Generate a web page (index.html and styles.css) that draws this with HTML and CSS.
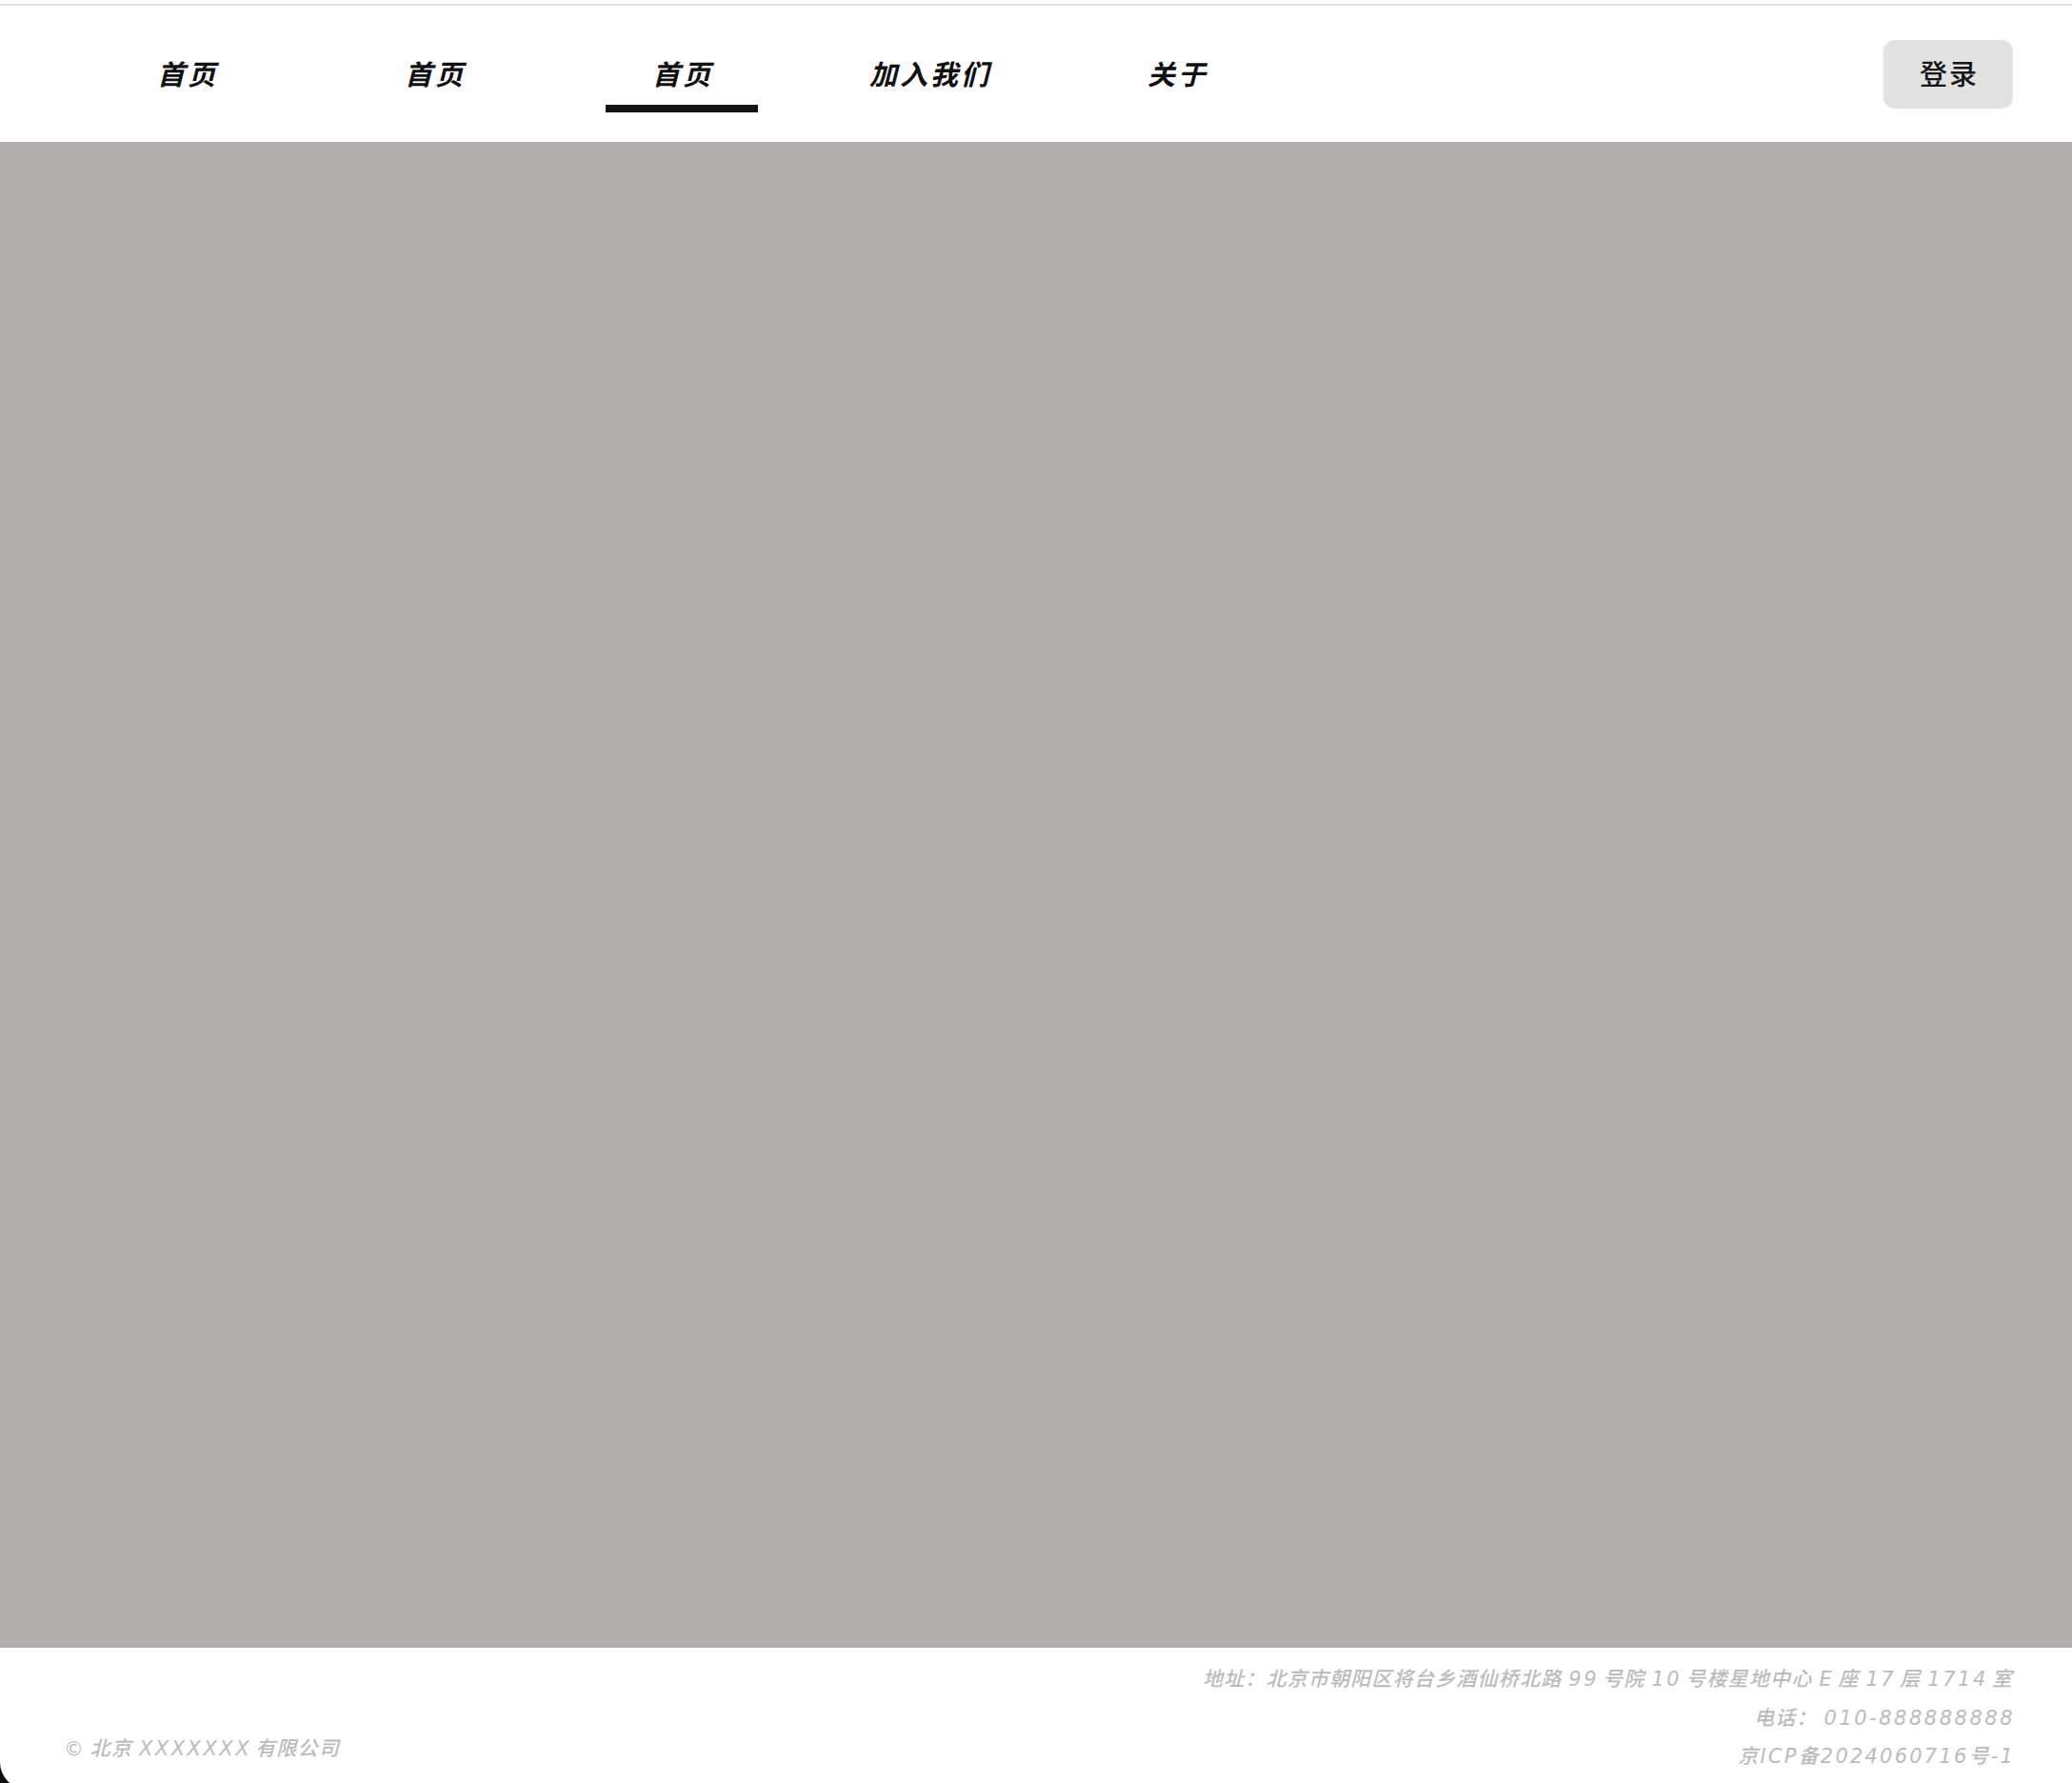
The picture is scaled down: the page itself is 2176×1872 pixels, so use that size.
FILE: index.html
```html
<!DOCTYPE html>
<html lang="zh-CN">
<head>
<meta charset="utf-8">
<title>首页</title>
<link rel="stylesheet" href="styles.css">
</head>
<body>
<div class="page">
  <div class="topline"></div>
  <header class="header">
    <nav class="nav">
      <a class="nav-item">首页</a>
      <a class="nav-item">首页</a>
      <a class="nav-item active">首页</a>
      <a class="nav-item">加入我们</a>
      <a class="nav-item">关于</a>
    </nav>
    <button class="login">登录</button>
  </header>
  <main class="hero"></main>
  <footer class="footer">
    <div class="copyright"><span class="en first">©</span>北京<span class="en">XXXXXXX</span>有限公司</div>
    <div class="info">
      <div class="info-line">地址：北京市朝阳区将台乡酒仙桥北路<span class="en">99</span>号院<span class="en">10</span>号楼星地中心<span class="en">E</span>座<span class="en">17</span>层<span class="en">1714</span>室</div>
      <div class="info-line">电话：<span class="en end">010-888888888</span></div>
      <div class="info-line">京<span class="en tight">ICP</span>备<span class="en tight">2024060716</span>号<span class="en tight end">-1</span></div>
    </div>
  </footer>
</div>
</body>
</html>
```
FILE: styles.css
```css
html {
  background: #140d0e;
  overflow: hidden;
}
body {
  margin: 0;
  font-family: "Noto Sans CJK SC", "Noto Sans", sans-serif;
}
.page {
  background: #ffffff;
  display: flex;
  flex-direction: column;
  height: 1879px;
  border-bottom-left-radius: 29px;
  overflow: hidden;
}
.topline {
  flex-shrink: 0;
  margin-top: 4px;
  height: 2px;
  background: #e0e0e0;
}
.header {
  flex-shrink: 0;
  height: 143px;
  display: flex;
  align-items: center;
  justify-content: space-between;
  padding: 0 62px 0 67px;
}
.nav {
  display: flex;
  align-items: center;
  margin-top: -3px;
}
.nav-item {
  position: relative;
  width: 260px;
  text-align: center;
  font-size: 29px;
  line-height: 40px;
  font-weight: 700;
  font-style: italic;
  letter-spacing: 3px;
  color: #111111;
  text-decoration: none;
}
.nav-item.active::after {
  content: "";
  position: absolute;
  left: 50%;
  top: 54px;
  width: 160px;
  height: 8px;
  margin-left: -81px;
  background: #151515;
}
.login {
  width: 136px;
  height: 72px;
  border: none;
  border-radius: 12px;
  background: #e2e2e2;
  color: #161616;
  font-family: "Noto Sans CJK SC", "Noto Sans", sans-serif;
  font-size: 29px;
  font-weight: 500;
  letter-spacing: 2px;
  padding: 0 0 3px 2px;
  display: flex;
  align-items: center;
  justify-content: center;
}
.hero {
  flex-shrink: 0;
  height: 1581px;
  background: #b0adac;
}
.footer {
  flex: 1;
  display: flex;
  justify-content: space-between;
  align-items: flex-end;
  padding: 11px 62px 18px 67px;
  color: #bbbbbb;
  font-family: "Noto Sans CJK SC", sans-serif;
  font-size: 21px;
  font-weight: 500;
  font-style: italic;
  letter-spacing: 1.2px;
}
.en {
  font-family: "DejaVu Sans", sans-serif;
  line-height: 1;
  letter-spacing: 2.5px;
  margin: 0 4px 0 7px;
}
.en.tight {
  letter-spacing: 2.2px;
  margin: 0 0 0 1px;
}
.en.first {
  margin-left: 0;
}
.en.end {
  margin-right: -2px;
}
.copyright {
  line-height: 40px;
  margin-bottom: 9px;
}
.info {
  text-align: right;
}
.info-line {
  line-height: 40.5px;
}
```
